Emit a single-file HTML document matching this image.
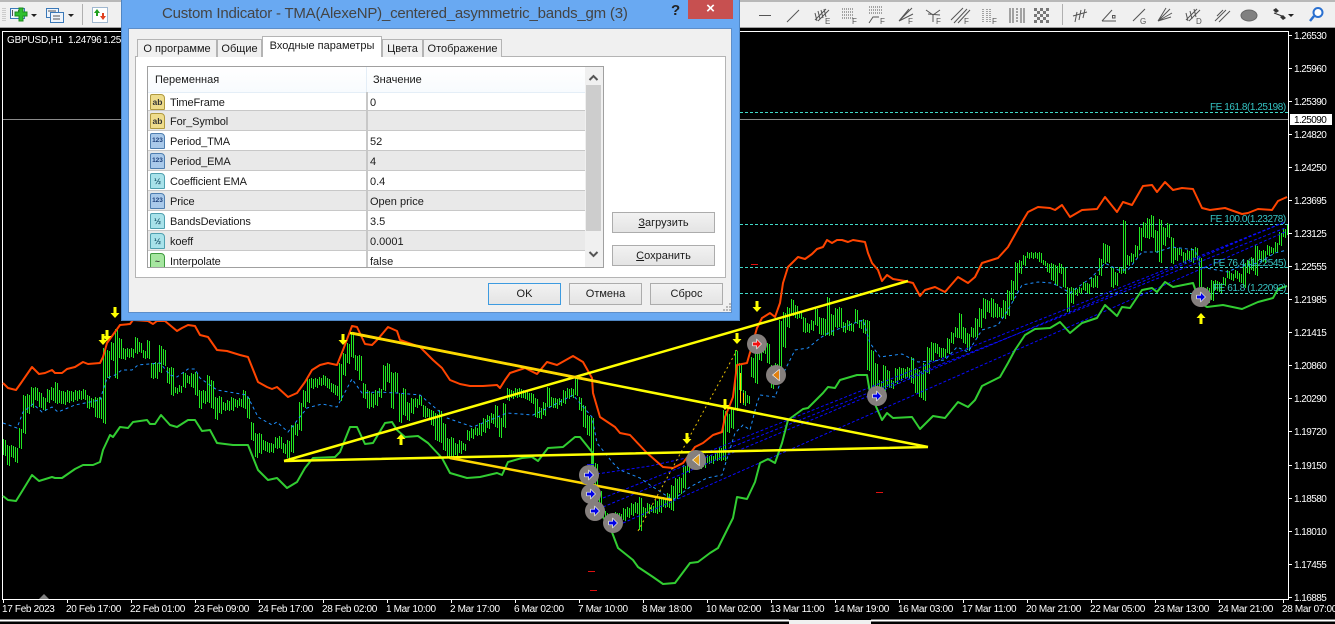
<!DOCTYPE html>
<html><head><meta charset="utf-8"><style>
html,body{margin:0;padding:0;background:#000;overflow:hidden}
body{width:1335px;height:624px;position:relative;font-family:"Liberation Sans","Noto Sans CJK SC",sans-serif}
#tb{position:absolute;left:0;top:0;width:1335px;height:28px;background:#f0f0f0;border-top:2px solid #b8b8b8;border-bottom:1px solid #a0a0a0;box-sizing:border-box}
svg.c{position:absolute;left:0;top:0}
svg text{font-family:"Liberation Sans",sans-serif}
.a{font-size:10px;fill:#fff;letter-spacing:-.55px}
.t{font-size:10px;fill:#fff;letter-spacing:-.33px}
.fe{font-size:10px;fill:#35c4c4;letter-spacing:-.45px}
#d{position:absolute;left:121px;top:0;width:619px;height:321px;background:#69a9f2;border:1px solid #4f86c4;border-top:none;box-sizing:border-box}
.x{position:absolute;white-space:nowrap;color:#1a1a1a;font-size:11px;line-height:14px}
.tab{position:absolute;box-sizing:border-box;background:#f0f0f0;border:1px solid #b4b4b4;border-bottom:none;font-size:11px;color:#1a1a1a;text-align:center;line-height:18px;white-space:nowrap}
.btn{position:absolute;box-sizing:border-box;width:73px;height:22px;background:linear-gradient(#f2f2f2,#e4e4e4);border:1px solid #acacac;font-size:11px;color:#1a1a1a;text-align:center;line-height:20px}
.r{position:absolute;left:0;width:437px;height:20px;box-sizing:border-box;border-bottom:1px solid #c8c8c8;font-size:11px;line-height:20px;color:#1a1a1a}
.r.g{background:#e9e9e9}
.r span.n{position:absolute;left:22px;top:1px;white-space:nowrap;letter-spacing:-.12px}
.r span.v{position:absolute;left:222px;top:1px;white-space:nowrap}
.r i{position:absolute;left:218px;top:0;width:2px;height:20px;background:#c8c8c8}
.ic{position:absolute;left:2px;top:2px;width:15px;height:16px;box-sizing:border-box;border:1px solid;border-radius:2px 4px 1px 1px;font:bold 8.5px/14px "Liberation Sans",sans-serif;text-align:center;font-style:normal;color:#333}
.ab{background:#eedc8c;border-color:#b09a40}
.n1{background:#a9c9ea;border-color:#4f7fb0;color:#1d3f7a;font-size:6.5px}
.h{background:#a8e2ea;border-color:#50a0b0;color:#205a70}
.bo{background:#a6e6a0;border-color:#3f9a3f}
</style></head><body>
<svg class="c" width="1335" height="624" viewBox="0 0 1335 624">
<defs><clipPath id="pl"><rect x="3" y="32" width="1285" height="567"/></clipPath></defs>
<!-- levels -->
<path d="M3 119.5H1288" stroke="#8a8a8a" shape-rendering="crispEdges"/>
<path d="M400 112.5H1288M400 224.5H1288M400 267.5H1288M400 293.5H1288" stroke="#40d8c8" stroke-dasharray="3 2" shape-rendering="crispEdges"/>
<!-- bars -->
<g clip-path="url(#pl)">
<path id="bars" fill="none" stroke="#22e622" shape-rendering="crispEdges" d="M3.5 439V455M7.5 445V465M11.5 445V457M15.5 447V462M19.5 428V448M23.5 395V433M27.5 394V413M31.5 387V407M35.5 387V400M39.5 392V407M43.5 397V410M47.5 389V402M51.5 387V400M55.5 382V403M59.5 390V403M63.5 391V404M67.5 390V402M71.5 391V401M75.5 390V400M79.5 390V399M83.5 389V399M87.5 395V408M91.5 398V407M95.5 397V417M99.5 397V418M103.5 348V423M107.5 350V378M111.5 342V360M115.5 329V378M119.5 338V358M123.5 348V359M127.5 348V357M131.5 348V357M135.5 337V353M139.5 342V352M143.5 350V358M147.5 340V358M151.5 363V378M155.5 362V378M159.5 345V372M163.5 349V365M167.5 367V383M171.5 367V395M175.5 387V393M179.5 385V392M183.5 372V387M187.5 375V383M191.5 373V387M195.5 372V395M199.5 390V408M203.5 390V403M207.5 375V402M211.5 380V408M215.5 397V419M219.5 396V413M223.5 402V410M227.5 400V410M231.5 397V410M235.5 399V407M239.5 398V406M243.5 390V408M247.5 397V418M251.5 422V440M255.5 433V457M259.5 433V453M263.5 440V450M267.5 442V452M271.5 443V452M275.5 437V448M279.5 436V448M283.5 443V453M287.5 440V458M291.5 425V452M295.5 423V435M299.5 402V430M303.5 390V407M307.5 378V402M311.5 378V388M315.5 378V387M319.5 377V385M323.5 375V385M327.5 378V388M331.5 383V392M335.5 385V395M339.5 363V400M343.5 353V375M347.5 343V363M351.5 333V357M355.5 355V370M359.5 355V380M363.5 383V398M367.5 390V408M371.5 393V407M375.5 390V405M379.5 388V397M383.5 365V390M387.5 363V382M391.5 372V408M395.5 372V392M399.5 393V422M403.5 388V415M407.5 402V420M411.5 398V413M415.5 398V407M419.5 395V405M423.5 405V417M427.5 408V417M431.5 410V425M435.5 413V440M439.5 410V442M443.5 423V450M447.5 438V458M451.5 437V457M455.5 443V455M459.5 440V453M463.5 443V450M467.5 430V440M471.5 428V438M475.5 427V435M479.5 423V435M483.5 418V432M487.5 415V428M491.5 413V423M495.5 405V427M499.5 417V437M503.5 403V427M507.5 388V400M511.5 390V398M515.5 388V397M519.5 388V397M523.5 390V398M527.5 392V400M531.5 393V403M535.5 398V417M539.5 407V418M543.5 402V415M547.5 387V407M551.5 397V407M555.5 398V408M559.5 398V405M563.5 390V403M567.5 388V398M571.5 388V397M575.5 377V395M579.5 397V410M583.5 405V427M587.5 415V435M591.5 417V477M595.5 463V513M599.5 490V517M603.5 510V518M607.5 513V523M611.5 517V527M615.5 512V523M619.5 513V523M623.5 508V520M627.5 507V517M631.5 503V515M635.5 502V513M639.5 497V530M643.5 507V517M647.5 503V513M651.5 505V512M655.5 500V513M659.5 497V512M663.5 497V507M667.5 493V507M671.5 485V510M675.5 478V498M679.5 477V493M683.5 465V488M687.5 462V472M691.5 458V468M695.5 457V468M699.5 455V468M703.5 457V467M707.5 455V463M711.5 455V463M715.5 452V460M719.5 447V460M723.5 410V460M727.5 413V432M731.5 407V428M735.5 350V410M739.5 363V390M743.5 390V405M747.5 395V403M751.5 357V377M755.5 337V383M759.5 342V360M763.5 343V353M767.5 343V363M771.5 365V388M775.5 363V380M779.5 320V375M783.5 312V347M787.5 307V327M791.5 299V315M795.5 305V318M799.5 312V318M803.5 317V332M807.5 323V332M811.5 320V330M815.5 308V325M819.5 317V334M823.5 318V335M827.5 297V335M831.5 314V335M835.5 308V327M839.5 307V327M843.5 322V332M847.5 320V330M851.5 323V331M855.5 309V323M859.5 320V328M863.5 319V333M867.5 320V370M871.5 350V393M875.5 363V387M879.5 380V400M883.5 365V390M887.5 370V387M891.5 380V388M895.5 368V383M899.5 367V380M903.5 368V378M907.5 367V378M911.5 357V383M915.5 368V393M919.5 370V397M923.5 363V400M927.5 347V373M931.5 342V360M935.5 343V353M939.5 347V357M943.5 348V357M947.5 338V353M951.5 332V343M955.5 327V337M959.5 313V338M963.5 327V343M967.5 333V350M971.5 327V337M975.5 318V337M979.5 308V327M983.5 298V318M987.5 300V312M991.5 298V317M995.5 303V317M999.5 307V317M1003.5 300V318M1007.5 290V315M1011.5 280V300M1015.5 262V290M1019.5 260V273M1023.5 255V265M1027.5 252V258M1031.5 252V258M1035.5 252V258M1039.5 252V262M1043.5 260V265M1047.5 263V272M1051.5 263V280M1055.5 265V285M1059.5 263V273M1063.5 267V287M1067.5 287V312M1071.5 287V303M1075.5 288V295M1079.5 287V293M1083.5 282V290M1087.5 283V293M1091.5 277V287M1095.5 275V287M1099.5 258V275M1103.5 243V263M1107.5 245V262M1111.5 267V287M1115.5 272V285M1119.5 267V273M1123.5 220V273M1127.5 255V265M1131.5 253V262M1135.5 245V257M1139.5 227V250M1143.5 222V237M1147.5 218V238M1151.5 215V237M1155.5 230V252M1159.5 219V262M1163.5 227V245M1167.5 223V237M1171.5 237V263M1175.5 247V260M1179.5 248V255M1183.5 252V263M1187.5 250V260M1191.5 248V262M1195.5 247V258M1199.5 257V287M1203.5 287V305M1207.5 287V302M1211.5 280V300M1215.5 280V290M1219.5 282V292M1223.5 277V285M1227.5 270V278M1231.5 273V280M1235.5 270V278M1239.5 273V282M1243.5 262V287M1247.5 260V273M1251.5 257V270M1255.5 245V275M1259.5 250V260M1263.5 250V262M1267.5 245V255M1271.5 247V253M1275.5 242V252M1279.5 232V245M1283.5 228V237M1287.5 225V235"/>
<use href="#bars" x="2" y="1"/>
</g>
<!-- frame -->
<path d="M2.5 31V599.5H1288.5V31M2 31.5H1289" stroke="#fff" fill="none" shape-rendering="crispEdges"/>
<path d="M0 620.5H789M871 620.5H1335" stroke="#fff" stroke-width="2" shape-rendering="crispEdges"/>
<rect x="789" y="620" width="82" height="4" fill="#f0f0f0"/>
<!-- dotted channels -->
<path fill="none" stroke="#0a0aff" stroke-dasharray="3 2" d="M597 474L650 466L700 455L1285 222M603 507L1285 222M603 498L1285 228M623 523L1285 232"/>
<!-- centre line -->
<polyline fill="none" stroke="#1e90ff" stroke-dasharray="3 3" points="3,423 17,428 23,412 33,404 42,412 52,407 58,412 75,405 100,400 107,378 115,375 122,370 132,370 138,365 160,363 170,375 177,377 188,369 195,369 200,378 217,390 247,395 258,417 272,425 277,422 288,432 307,408 322,404 337,407 352,379 362,393 378,392 397,393 420,395 447,418 473,427 507,413 533,415 550,407 573,395 592,417 597,443 613,463 620,470 640,478 650,485 673,500 690,487 707,478 722,475 735,433 743,425 750,430 757,403 760,395 775,397 785,370 795,350 808,348 820,338 830,332 863,320 870,343 880,357 902,354 918,362 945,360 957,347 968,352 982,330 998,325 1008,310 1022,285 1038,282 1052,283 1062,288 1070,293 1092,277 1105,263 1118,270 1128,270 1142,252 1157,252 1172,247 1195,250 1200,267 1228,272 1238,267 1258,263 1275,253 1287,250"/>
<!-- upper band -->
<polyline fill="none" stroke="#ff4500" stroke-width="2" stroke-linejoin="round" points="3,383 8,388 16,390 21,383 32,367 39,374 45,373 52,370 55,373 62,373 67,369 75,367 83,362 88,364 100,363 103,357 107,343 115,332 120,325 130,324 133,320 148,321 153,324 157,321 165,321 177,331 182,328 188,325 195,326 200,335 208,337 217,350 227,351 240,355 248,357 258,382 267,387 272,389 277,387 288,397 297,393 305,382 312,370 320,365 328,363 337,365 343,350 352,326 357,327 365,344 372,345 378,339 388,327 397,331 400,340 420,347 433,360 442,368 450,380 460,384 470,386 483,386 497,385 500,388 505,380 510,373 525,368 537,374 547,362 557,365 573,356 583,362 592,378 593,393 600,417 615,427 620,433 630,435 647,453 663,467 673,468 683,463 695,447 703,443 713,435 722,432 725,417 733,397 737,365 747,363 757,328 762,318 770,313 775,317 780,303 783,283 788,267 798,257 805,259 812,254 817,249 823,247 827,240 832,243 837,240 842,240 848,242 853,240 865,242 868,253 872,263 878,270 882,281 887,275 893,279 905,281 913,283 920,296 925,290 935,287 945,292 958,277 968,283 975,277 982,263 998,258 1008,247 1022,222 1028,212 1038,207 1050,208 1055,210 1062,205 1070,217 1082,210 1097,209 1105,197 1117,212 1123,202 1132,205 1143,186 1152,185 1157,192 1165,182 1173,190 1182,188 1193,189 1202,208 1210,210 1225,208 1242,214 1248,213 1258,209 1272,210 1278,201 1287,197"/>
<!-- lower band -->
<polyline fill="none" stroke="#32cd32" stroke-width="2" stroke-linejoin="round" points="3,496 8,500 16,501 21,493 32,475 39,481 52,477 55,478 62,478 75,469 83,465 93,465 100,462 103,450 110,435 113,437 120,427 128,428 133,422 147,420 150,424 155,424 161,415 170,425 177,427 188,420 195,420 202,431 210,430 217,443 233,445 248,445 258,470 268,480 277,478 287,488 297,482 305,468 313,458 335,457 340,452 350,427 357,427 365,444 373,443 385,423 392,422 397,430 405,437 418,436 428,443 442,458 450,473 467,478 480,477 497,473 502,475 508,462 522,458 532,457 538,461 548,448 563,447 575,437 580,437 592,452 593,500 600,513 610,527 618,548 633,560 638,567 653,577 663,584 675,583 690,563 698,562 710,553 718,548 733,518 737,497 747,499 755,482 760,463 768,459 775,463 782,443 788,420 803,409 808,408 823,393 828,387 835,388 840,380 857,375 867,375 870,393 882,420 887,413 893,418 912,417 920,429 933,416 945,418 958,402 968,407 975,400 982,386 1000,377 1008,363 1015,350 1025,335 1035,329 1050,328 1060,322 1070,333 1082,323 1097,318 1105,305 1117,316 1122,307 1130,308 1142,290 1152,288 1157,292 1165,282 1173,287 1193,283 1200,303 1207,307 1223,305 1242,309 1258,302 1273,298 1278,289 1287,286"/>
<!-- yellow construction -->
<path fill="none" stroke="#e8c000" stroke-dasharray="2 3" d="M638 531L737 350"/>
<path fill="none" stroke="#ffff00" stroke-width="2.5" d="M284 461L908 281M284 461L928 447M350 333L928 447"/>
<path fill="none" stroke="#ffd700" stroke-width="2.5" d="M352 333L600 382M450 458L672 500"/>
<path fill="none" stroke="#ffd000" d="M740.5 373V403M743.5 393V403"/>
<!-- red dashes -->
<path stroke="#e01010" shape-rendering="crispEdges" d="M751 264.5H758M876 492.5H883M588 571.5H595M590 590.5H597"/>
<path stroke="#1010e0" stroke-width="1" shape-rendering="crispEdges" d="M587 464.5H594M593 502.5H599"/>
<!-- markers -->
<g fill="#857f7d">
<circle cx="589" cy="475" r="10"/><circle cx="591" cy="494" r="10"/><circle cx="595" cy="511" r="10"/><circle cx="613" cy="523" r="10"/><circle cx="696" cy="460" r="10"/><circle cx="757" cy="344" r="10"/><circle cx="776" cy="375" r="10"/><circle cx="877" cy="396" r="10"/><circle cx="1201" cy="297" r="10"/>
</g>
<g fill="#0000e6" stroke="#fff" stroke-width="1.2" paint-order="stroke">
<path transform="translate(589 475)" d="M-4 -1.5H0V-4L4 0L0 4V1.5H-4Z"/>
<path transform="translate(591 494)" d="M-4 -1.5H0V-4L4 0L0 4V1.5H-4Z"/>
<path transform="translate(595 511)" d="M-4 -1.5H0V-4L4 0L0 4V1.5H-4Z"/>
<path transform="translate(613 523)" d="M-4 -1.5H0V-4L4 0L0 4V1.5H-4Z"/>
<path transform="translate(877 396)" d="M-4 -1.5H0V-4L4 0L0 4V1.5H-4Z"/>
<path transform="translate(1201 297)" d="M-4 -1.5H0V-4L4 0L0 4V1.5H-4Z"/>
<path transform="translate(757 344)" fill="#f01010" d="M-4 -1.5H0V-4L4 0L0 4V1.5H-4Z"/>
<path transform="translate(696 460)" fill="#e0a020" d="M3 -5V5L-3 0Z"/>
<path transform="translate(776 375)" fill="#e08010" d="M3 -5V5L-3 0Z"/>
</g>
<g fill="#ffff00">
<path transform="translate(115 313)" d="M-1.5 -6H1.5V0H4.5L0 5L-4.5 0H-1.5Z"/>
<path transform="translate(103 340)" d="M-1.5 -6H1.5V0H4.5L0 5L-4.5 0H-1.5Z"/>
<path transform="translate(107 336)" d="M-1.5 -6H1.5V0H4.5L0 5L-4.5 0H-1.5Z"/>
<path transform="translate(343 340)" d="M-1.5 -6H1.5V0H4.5L0 5L-4.5 0H-1.5Z"/>
<path transform="translate(687 439)" d="M-1.5 -6H1.5V0H4.5L0 5L-4.5 0H-1.5Z"/>
<path transform="translate(737 339)" d="M-1.5 -6H1.5V0H4.5L0 5L-4.5 0H-1.5Z"/>
<path transform="translate(757 307)" d="M-1.5 -6H1.5V0H4.5L0 5L-4.5 0H-1.5Z"/>
<path transform="translate(725 405)" d="M-1.5 -6H1.5V0H4.5L0 5L-4.5 0H-1.5Z"/>
<path transform="translate(401 439)" d="M-1.5 6H1.5V0H4.5L0 -5L-4.5 0H-1.5Z"/>
<path transform="translate(1201 318)" d="M-1.5 6H1.5V0H4.5L0 -5L-4.5 0H-1.5Z"/>
</g>
<path d="M44 594L49 599H39Z" fill="#808080"/>
<!-- axis ticks -->
<path stroke="#fff" shape-rendering="crispEdges" d="M1288 35.5h4M1288 68.5h4M1288 101.5h4M1288 134.5h4M1288 167.5h4M1288 200.5h4M1288 233.5h4M1288 266.5h4M1288 299.5h4M1288 332.5h4M1288 365.5h4M1288 398.5h4M1288 431.5h4M1288 465.5h4M1288 498.5h4M1288 531.5h4M1288 564.5h4M1288 597.5h4M3.5 599v4M67.5 599v4M131.5 599v4M195.5 599v4M259.5 599v4M323.5 599v4M387.5 599v4M451.5 599v4M515.5 599v4M579.5 599v4M643.5 599v4M707.5 599v4M771.5 599v4M835.5 599v4M899.5 599v4M963.5 599v4M1027.5 599v4M1091.5 599v4M1155.5 599v4M1219.5 599v4M1283.5 599v4"/>
<g>
<text class="a" x="1294" y="39">1.26530</text><text class="a" x="1294" y="72">1.25960</text><text class="a" x="1294" y="105">1.25390</text><text class="a" x="1294" y="138">1.24820</text><text class="a" x="1294" y="171">1.24250</text><text class="a" x="1294" y="204">1.23695</text><text class="a" x="1294" y="237">1.23125</text><text class="a" x="1294" y="270">1.22555</text><text class="a" x="1294" y="303">1.21985</text><text class="a" x="1294" y="336">1.21415</text><text class="a" x="1294" y="369">1.20860</text><text class="a" x="1294" y="402">1.20290</text><text class="a" x="1294" y="435">1.19720</text><text class="a" x="1294" y="469">1.19150</text><text class="a" x="1294" y="502">1.18580</text><text class="a" x="1294" y="535">1.18010</text><text class="a" x="1294" y="568">1.17455</text><text class="a" x="1294" y="601">1.16885</text>
</g>
<rect x="1290" y="114" width="42" height="11" fill="#fff"/>
<text class="a" x="1294" y="123" style="fill:#000">1.25090</text>
<g>
<text class="t" x="2" y="612">17 Feb 2023</text><text class="t" x="66" y="612">20 Feb 17:00</text><text class="t" x="130" y="612">22 Feb 01:00</text><text class="t" x="194" y="612">23 Feb 09:00</text><text class="t" x="258" y="612">24 Feb 17:00</text><text class="t" x="322" y="612">28 Feb 02:00</text><text class="t" x="386" y="612">1 Mar 10:00</text><text class="t" x="450" y="612">2 Mar 17:00</text><text class="t" x="514" y="612">6 Mar 02:00</text><text class="t" x="578" y="612">7 Mar 10:00</text><text class="t" x="642" y="612">8 Mar 18:00</text><text class="t" x="706" y="612">10 Mar 02:00</text><text class="t" x="770" y="612">13 Mar 11:00</text><text class="t" x="834" y="612">14 Mar 19:00</text><text class="t" x="898" y="612">16 Mar 03:00</text><text class="t" x="962" y="612">17 Mar 11:00</text><text class="t" x="1026" y="612">20 Mar 21:00</text><text class="t" x="1090" y="612">22 Mar 05:00</text><text class="t" x="1154" y="612">23 Mar 13:00</text><text class="t" x="1218" y="612">24 Mar 21:00</text><text class="t" x="1282" y="612">28 Mar 07:00</text>
</g>
<text class="fe" x="1210" y="110">FE 161.8(1.25198)</text>
<text class="fe" x="1210" y="222">FE 100.0(1.23278)</text>
<text class="fe" x="1213" y="266">FE 76.4 (1.22545)</text>
<text class="fe" x="1213" y="291">FE 61.8 (1.22092)</text>
<text x="7" y="43" fill="#fff" style="font-size:10px;letter-spacing:-.2px">GBPUSD,H1</text>
<text x="68" y="43" fill="#fff" style="font-size:10px;letter-spacing:-.4px">1.24796</text>
<text x="103" y="43" fill="#fff" style="font-size:10px;letter-spacing:-.4px">1.25</text>
</svg>

<div id="tb"></div>
<!-- toolbar icons -->
<svg class="c" width="1335" height="28" viewBox="0 0 1335 28">
<path d="M3 8v13M5 8v13" stroke="#a8a8a8" stroke-dasharray="1 1"/>
<!-- new chart -->
<rect x="10.500" y="8.500" width="14" height="10" fill="#eef4fb" stroke="#3a78b8"/>
<path d="M12.500 10v6M15.500 12v4M18.500 10v5" stroke="#555"/>
<path d="M19 8h4v4h4v4h-4v5h-4v-5h-4v-4h4z" fill="#2fc02f" stroke="#1c8a1c"/>
<path d="M31 14h6l-3 3z" fill="#222"/>
<!-- profiles -->
<rect x="46.500" y="8.500" width="12" height="9" fill="#eef4fb" stroke="#3a78b8"/>
<rect x="50.500" y="12.500" width="13" height="10" fill="#eef4fb" stroke="#3a78b8"/>
<path d="M48 11h8M53 16h7M53 19h7" stroke="#555"/>
<path d="M68 14h6l-3 3z" fill="#222"/>
<path d="M82.500 4v21" stroke="#b0b0b0"/>
<!-- market watch -->
<rect x="92.500" y="7.500" width="15" height="15" fill="#fff" stroke="#a0b8d0"/>
<path d="M97 9l3 4h-2v3h-2v-3h-2z" fill="#20a020"/><path d="M103 20l-3-4h2v-3h2v3h2z" fill="#e04020"/>
<!-- line studies -->
<g fill="none" stroke="#555" stroke-width="1">
<path d="M759 15.500h12"/>
<path d="M787 22L799 10"/>
<path d="M815 20L826 9M818 21L829 10M815 13l2 8M818 11l2 8M821 10l2 8M824 9l2 8" />
<path d="M842 9h12M842 12h12M842 15h12M842 18h12" stroke-dasharray="1 1"/>
<path d="M869 7h13M869 10h13M869 13h13" stroke-dasharray="1 1"/><path d="M869 23l4-6h6"/>
<path d="M899 21L912 8M899 21L909 9M899 21L913 14"/>
<path d="M926 10l7 5 7-5M933 15v7M928 14l12 1"/>
<path d="M954 23L967 9M958 23L970 10M951 20L963 8"/>
<path d="M983 9v13M987 9v13M990 9v13" stroke-dasharray="1 1"/>
<path d="M1010 8v15M1013 8v15M1021 8v15M1024 8v15"/><path d="M1017 8v15" stroke-dasharray="2 1"/>
</g>
<g fill="#555" style="font-size:8px">
<text x="825" y="24">E</text><text x="852" y="24">F</text><text x="880" y="24">F</text><text x="908" y="24">F</text><text x="936" y="24">F</text><text x="964" y="24">F</text><text x="992" y="24">F</text>
<text x="1140" y="24">G</text><text x="1196" y="24">D</text>
</g>
<g fill="#777"><path d="M1040 8h3v3h-3zM1046 8h3v3h-3zM1052 8h3v3h-3zM1043 11h3v3h-3zM1049 11h3v3h-3zM1040 14h3v3h-3zM1046 14h3v3h-3zM1052 14h3v3h-3zM1043 17h3v3h-3zM1049 17h3v3h-3zM1040 20h3v3h-3zM1046 20h3v3h-3zM1052 20h3v3h-3z" transform="translate(-6 0)"/></g>
<path d="M1062.500 4v21" stroke="#b0b0b0"/>
<g fill="none" stroke="#555">
<path d="M1075 22L1077 12M1079 20L1081 10M1083 18L1085 9M1073 16L1087 12"/>
<path d="M1102 21h14M1102 21L1112 10"/><rect x="1112.500" y="15.500" width="2.500" height="2.500"/>
<path d="M1133 21L1145 9"/>
<path d="M1158 21L1170 9M1158 21L1172 13M1158 21L1171 17M1158 21L1166 8"/>
<path d="M1186 20L1197 9M1189 21L1200 10M1186 13l2 8M1190 11l2 8M1194 9l2 8"/>
<path d="M1215 21L1226 10M1219 22L1230 11M1217 16L1223 10"/>
</g>
<ellipse cx="1249" cy="15.500" rx="8" ry="5.500" fill="#808080" stroke="#666"/>
<path d="M1273 10l3-2 3 3-3 2zM1280 17l3-2 3 3-3 2z" fill="#333"/><path d="M1274 13l8 3" stroke="#333"/>
<path d="M1288 14h6l-3 3z" fill="#222"/>
<circle cx="1318" cy="12.500" r="4.500" fill="#fff" stroke="#2a70d0" stroke-width="2"/><path d="M1314 16l-4 5" stroke="#2a70d0" stroke-width="2.500"/>
</svg>

<div id="d">
<div class="x" style="left:40px;top:5px;font-size:15px;line-height:18px;color:#444;letter-spacing:-.21px">Custom Indicator - TMA(AlexeNP)_centered_asymmetric_bands_gm (3)</div>
<div class="x" style="left:549px;top:2px;font-size:15px;line-height:17px;font-weight:bold;color:#222">?</div>
<div style="position:absolute;left:566px;top:0;width:45px;height:19px;background:#c75050;color:#fff;text-align:center;font:bold 15px/18px 'Liberation Sans',sans-serif">×</div>
</div>
<div style="position:absolute;left:128px;top:28px;width:604px;height:285px;background:#f0f0f0;border:1px solid #5d8ec9;box-sizing:border-box"></div>

<!-- tab panel -->
<div style="position:absolute;left:135px;top:56px;width:591px;height:222px;background:#fff;border:1px solid #b4b4b4;box-sizing:border-box"></div>
<div class="tab" style="left:137px;top:39px;width:80px;height:18px">О программе</div>
<div class="tab" style="left:217px;top:39px;width:45px;height:18px">Общие</div>
<div class="tab" style="left:382px;top:39px;width:41px;height:18px">Цвета</div>
<div class="tab" style="left:423px;top:39px;width:79px;height:18px">Отображение</div>
<div class="tab" style="left:262px;top:36px;width:120px;height:21px;background:#fff;z-index:2;line-height:19px">Входные параметры</div>

<!-- table -->
<div style="position:absolute;left:147px;top:66px;width:457px;height:202px;background:#fff;border:1px solid #a0a0a0;box-sizing:border-box;overflow:hidden">
<div style="position:absolute;left:0;top:0;width:437px;height:25px;background:linear-gradient(#fff,#f8fbfe);border-bottom:1px solid #e4eef7;font-size:11px;line-height:27px;color:#1a1a1a"><span style="position:absolute;left:7px">Переменная</span><span style="position:absolute;left:225px">Значение</span><i style="position:absolute;left:218px;top:0;width:1px;height:25px;background:#e4eef7"></i></div>
<div class="r" style="top:25px;height:19px"><em class="ic ab">ab</em><span class="n">TimeFrame</span><span class="v">0</span><i></i></div>
<div class="r g" style="top:44px"><em class="ic ab">ab</em><span class="n">For_Symbol</span><i></i></div>
<div class="r" style="top:64px"><em class="ic n1">123</em><span class="n">Period_TMA</span><span class="v">52</span><i></i></div>
<div class="r g" style="top:84px"><em class="ic n1">123</em><span class="n">Period_EMA</span><span class="v">4</span><i></i></div>
<div class="r" style="top:104px"><em class="ic h">½</em><span class="n">Coefficient EMA</span><span class="v">0.4</span><i></i></div>
<div class="r g" style="top:124px"><em class="ic n1">123</em><span class="n">Price</span><span class="v">Open price</span><i></i></div>
<div class="r" style="top:144px"><em class="ic h">½</em><span class="n">BandsDeviations</span><span class="v">3.5</span><i></i></div>
<div class="r g" style="top:164px"><em class="ic h">½</em><span class="n">koeff</span><span class="v">0.0001</span><i></i></div>
<div class="r" style="top:184px"><em class="ic bo">~</em><span class="n">Interpolate</span><span class="v">false</span><i></i></div>
<!-- scrollbar -->
<div style="position:absolute;left:437px;top:0;width:18px;height:200px;background:#f0f0f0"></div>
<div style="position:absolute;left:438px;top:18px;width:15px;height:146px;background:#cdcdcd"></div>
<svg style="position:absolute;left:438px;top:4px" width="15" height="190"><path d="M3.500 9L7.500 5L11.500 9M3.500 181L7.500 185L11.500 181" fill="none" stroke="#555" stroke-width="2"/></svg>
</div>

<div class="btn" style="left:612px;top:212px;width:103px;height:21px"><u>З</u>агрузить</div>
<div class="btn" style="left:612px;top:245px;width:103px;height:21px"><u>С</u>охранить</div>
<div class="btn" style="left:488px;top:283px;border:1px solid #3d9be0">OK</div>
<div class="btn" style="left:569px;top:283px">Отмена</div>
<div class="btn" style="left:650px;top:283px">Сброс</div>
<svg class="c" style="left:722px;top:302px" width="10" height="10"><path d="M7 1h2v2h-2zM4 4h2v2h-2zM7 4h2v2h-2zM1 7h2v2h-2zM4 7h2v2h-2zM7 7h2v2h-2z" fill="#b8b8b8"/></svg>
</body></html>
